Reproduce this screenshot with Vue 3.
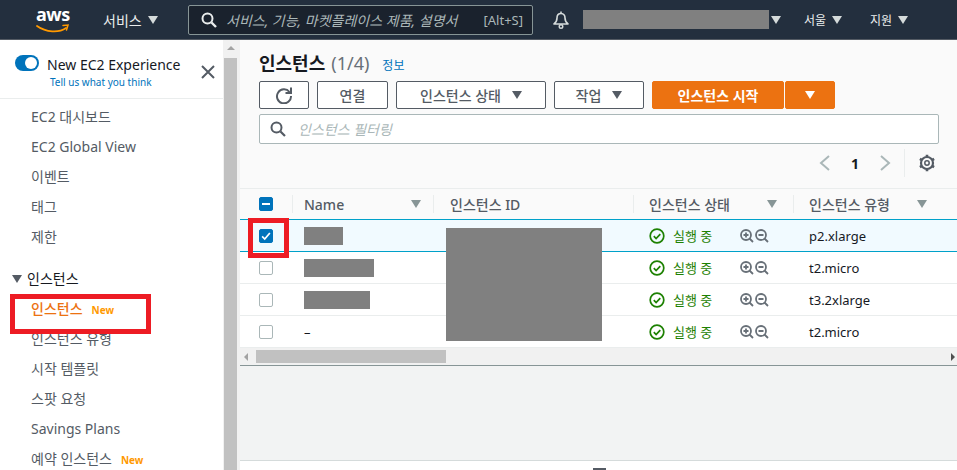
<template>
  <div class="page">
    <header class="topbar">
      <div class="logo">
        <span class="logo-text">aws</span>
        <svg class="logo-smile" width="34" height="10" viewBox="0 0 34 10">
          <path d="M1 2c9 6.500 22 7 29 2" fill="none" stroke="#f90" stroke-width="1.800" stroke-linecap="round" />
          <path d="M27 1.500l5-.5-1.500 5" fill="none" stroke="#f90" stroke-width="1.500" stroke-linecap="round" />
        </svg>
      </div>
      <div class="nav-item services">서비스 <i class="caret light" /></div>
      <div class="search">
        <svg width="18" height="18" viewBox="0 0 18 18" class="search-icon">
          <circle cx="7.500" cy="7.500" r="5" fill="none" stroke="#eaeded" stroke-width="2" />
          <path d="M11.500 11.500l4.500 4.500" stroke="#eaeded" stroke-width="2.400" />
        </svg>
        <span class="search-text">서비스, 기능, 마켓플레이스 제품, 설명서</span>
        <span class="search-key">[Alt+S]</span>
      </div>
      <svg class="bell" width="18" height="18" viewBox="0 0 18 18">
        <path d="M9 2.500c-3 0-4 2.500-4 4.500 0 3-1 4.500-3 6h14c-2-1.500-3-3-3-6 0-2-1-4.500-4-4.500z" fill="none" stroke="#d5dbdb" stroke-width="1.600" stroke-linejoin="round" />
        <circle cx="9" cy="15.500" r="1.800" fill="none" stroke="#d5dbdb" stroke-width="1.400" />
        <path d="M9 .5v2" stroke="#d5dbdb" stroke-width="1.600" />
      </svg>
      <div class="account-mask" />
      <i class="caret light account-caret" />
      <div class="nav-item region">서울 <i class="caret light" /></div>
      <div class="nav-item support">지원 <i class="caret light" /></div>
    </header>

    <div class="body">
      <aside class="sidebar">
        <div class="experience">
          <div class="toggle"><span class="knob" /></div>
          <div class="exp-text">
            <div class="exp-title">New EC2 Experience</div>
            <div class="exp-link">Tell us what you think</div>
          </div>
          <svg class="close" width="14" height="14" viewBox="0 0 14 14">
            <path d="M1 1l12 12M13 1L1 13" stroke="#545b64" stroke-width="2" />
          </svg>
        </div>
        <nav class="menu">
          <a v-for="m in topMenu" :key="m" class="menu-item">{{ m }}</a>
          <div class="menu-group"><i class="caret dark" /> 인스턴스</div>
          <a v-for="m in instanceMenu" :key="m.label" class="menu-item" :class="{ active: m.active }">
            {{ m.label }}<span v-if="m.isNew" class="new-tag">New</span>
          </a>
        </nav>
        <div class="red-box menu-box" />
      </aside>

      <div class="side-scroll">
        <span class="scroll-up" />
        <div class="side-thumb" />
      </div>

      <main class="main">
        <section class="panel">
          <div class="title-row">
            <h1>인스턴스</h1>
            <span class="count">(1/4)</span>
            <a class="info">정보</a>
          </div>
          <div class="actions">
            <button class="btn refresh">
              <svg width="18" height="18" viewBox="0 0 18 18">
                <path d="M14.500 6A7 7 0 1 0 16 10" fill="none" stroke="#545b64" stroke-width="2" />
                <path d="M16 1.500V7h-5.500" fill="none" stroke="#545b64" stroke-width="2" />
              </svg>
            </button>
            <button class="btn connect">연결</button>
            <button class="btn state">인스턴스 상태 <i class="caret dark" /></button>
            <button class="btn work">작업 <i class="caret dark" /></button>
            <div class="primary-group">
              <button class="btn primary start">인스턴스 시작</button>
              <button class="btn primary more"><i class="caret white" /></button>
            </div>
          </div>
          <div class="filter">
            <svg width="16" height="16" viewBox="0 0 16 16">
              <circle cx="6.500" cy="6.500" r="5" fill="none" stroke="#545b64" stroke-width="2" />
              <path d="M10.500 10.500l4.500 4.500" stroke="#545b64" stroke-width="2.200" />
            </svg>
            <span>인스턴스 필터링</span>
          </div>
          <div class="pager">
            <svg width="12" height="18" viewBox="0 0 12 18"><path d="M10 2L2 9l8 7" fill="none" stroke="#aab7b8" stroke-width="2" /></svg>
            <span class="page-num">1</span>
            <svg width="12" height="18" viewBox="0 0 12 18"><path d="M2 2l8 7-8 7" fill="none" stroke="#aab7b8" stroke-width="2" /></svg>
            <span class="pager-sep" />
            <svg class="gear" width="18" height="18" viewBox="0 0 18 18">
              <circle cx="9" cy="9" r="6" fill="none" stroke="#545b64" stroke-width="2.200" />
              <circle cx="9" cy="9" r="2.200" fill="none" stroke="#545b64" stroke-width="1.500" />
              <path d="M9 .8v2.400M9 14.800v2.400M1.900 4.900l2.100 1.200M14 11.900l2.100 1.200M1.900 13.100L4 11.900M14 6.100l2.100-1.200" stroke="#545b64" stroke-width="2.600" />
            </svg>
          </div>
        </section>

        <section class="table">
          <div class="row head">
            <div class="cell check"><span class="box on"><span class="dash" /></span></div>
            <div class="cell name"><b>Name</b><i class="filter-caret" /></div>
            <div class="cell id"><b>인스턴스 ID</b></div>
            <div class="cell status"><b>인스턴스 상태</b><i class="filter-caret" /></div>
            <div class="cell type"><b>인스턴스 유형</b><i class="filter-caret" /></div>
          </div>
          <div v-for="r in rows" :key="r.type + r.mask" class="row" :class="{ selected: r.selected }">
            <div class="cell check">
              <span class="box" :class="{ on: r.selected }">
                <svg v-if="r.selected" width="14" height="14" viewBox="0 0 14 14"><path d="M2.500 7.500l3 3 6-7" fill="none" stroke="#fff" stroke-width="2" /></svg>
              </span>
            </div>
            <div class="cell name">
              <span v-if="r.mask" class="mask" :style="{ width: r.mask + 'px' }" />
              <span v-else>–</span>
            </div>
            <div class="cell id" />
            <div class="cell status">
              <svg width="16" height="16" viewBox="0 0 16 16">
                <circle cx="8" cy="8" r="6.800" fill="none" stroke="#1d8102" stroke-width="1.700" />
                <path d="M4.800 8.200l2.300 2.300 4.200-4.400" fill="none" stroke="#1d8102" stroke-width="1.700" />
              </svg>
              <span class="running">실행 중</span>
              <svg class="zoom-icons" width="32" height="16" viewBox="0 0 32 16">
                <circle cx="7" cy="7" r="5" fill="none" stroke="#687078" stroke-width="1.800" />
                <path d="M10.500 10.500l3.500 3.500M4.500 7h5M7 4.500v5M25.500 10.500l3.500 3.500M19.500 7h5" stroke="#687078" stroke-width="1.800" />
                <circle cx="22" cy="7" r="5" fill="none" stroke="#687078" stroke-width="1.800" />
              </svg>
            </div>
            <div class="cell type">{{ r.type }}</div>
          </div>
          <div class="id-mask" />
          <div class="red-box check-box" />
        </section>

        <div class="h-scroll">
          <span class="arrow left" />
          <div class="h-thumb" />
          <span class="arrow right" />
        </div>
        <div class="grey-area" />
        <div class="detail">
          <span class="grip" />
        </div>
      </main>
    </div>
  </div>
</template>

<script setup>
const topMenu = ['EC2 대시보드', 'EC2 Global View', '이벤트', '태그', '제한']
const instanceMenu = [
  { label: '인스턴스', active: true, isNew: true },
  { label: '인스턴스 유형' },
  { label: '시작 템플릿' },
  { label: '스팟 요청' },
  { label: 'Savings Plans' },
  { label: '예약 인스턴스', isNew: true },
]
const rows = [
  { mask: 39, type: 'p2.xlarge', selected: true },
  { mask: 70, type: 't2.micro' },
  { mask: 66, type: 't3.2xlarge' },
  { mask: 0, type: 't2.micro' },
]
</script>

<style>
html, body { margin: 0; overflow: hidden; background: #fff; }
</style>

<style scoped>
.page {
  width: 957px;
  height: 470px;
  overflow: hidden;
  font-family: "Noto Sans", "Noto Sans CJK KR", sans-serif;
  font-size: 14px;
  color: #16191f;
  position: relative;
}
.caret {
  display: inline-block;
  width: 0;
  height: 0;
  border-left: 5px solid transparent;
  border-right: 5px solid transparent;
  border-top: 8px solid #545b64;
  margin-left: 4px;
}
.caret.light { border-top-color: #d5dbdb; }
.caret.white { border-top-color: #fff; }

/* top bar */
.topbar {
  height: 40px;
  box-sizing: border-box;
  background: #232f3e;
  border-bottom: 1px solid #545b64;
  display: flex;
  align-items: center;
  color: #eaeded;
  padding-left: 36px;
}
.logo { width: 34px; height: 30px; position: relative; margin-right: 33px; }
.logo-text { display: block; font: 700 18px/20px "Open Sans", sans-serif; color: #fff; margin-top: -1px; letter-spacing: -0.5px; }
.logo-smile { position: absolute; left: 0; top: 19px; }
.nav-item { font-size: 13px; white-space: nowrap; display: flex; align-items: center; gap: 2px; }
.services { width: 85px; font-size: 14px; }
.search {
  width: 345px;
  height: 30px;
  box-sizing: border-box;
  background: #1a222d;
  border: 1px solid #879596;
  border-radius: 2px;
  display: flex;
  align-items: center;
  padding: 0 9px 0 11px;
  font-style: italic;
  color: #aab7b8;
}
.search-icon { margin-right: 8px; }
.search-text { flex: 1; font-size: 14px; white-space: nowrap; }
.search-key { font-style: normal; font-size: 13px; }
.bell { margin-left: 19px; }
.account-mask { width: 186px; height: 19px; background: #808080; margin-left: 13px; }
.account-caret { margin-left: 2px; margin-right: 23px; }
.region { width: 66px; font-size: 12px; }
.support { font-size: 12px; }

/* body */
.body { display: flex; height: 430px; }
.sidebar { width: 223px; flex-shrink: 0; position: relative; background: #fff; }
.experience {
  height: 59px;
  box-sizing: border-box;
  border-bottom: 1px solid #eaeded;
  display: flex;
  padding: 15px 0 0 15px;
}
.toggle { width: 24px; height: 16px; border-radius: 8px; background: #0073bb; position: relative; margin-right: 8px; flex-shrink: 0; }
.knob { position: absolute; right: 2px; top: 2px; width: 12px; height: 12px; border-radius: 50%; background: #fff; }
.exp-text { width: 137px; white-space: nowrap; }
.exp-title { font-size: 14px; line-height: 19px; }
.exp-link { font-size: 10px; line-height: 14px; color: #0073bb; margin-left: 3px; margin-top: 1px; }
.close { margin: 10px 0 0 17px; }
.menu { padding-top: 3px; }
.menu-item {
  display: block;
  height: 30px;
  line-height: 30px;
  padding-left: 31px;
  color: #545b64;
  font-size: 14px;
  white-space: nowrap;
}
.menu-item.active { color: #ec7211; font-weight: 500; }
.new-tag { color: #ff9900; font-size: 10px; font-weight: 700; margin-left: 9px; }
.menu-group { height: 30px; line-height: 30px; margin-top: 12px; padding-left: 12px; color: #16191f; display: flex; align-items: center; gap: 5px; }
.menu-group .caret { margin-left: 0; }
.red-box { position: absolute; border: 5px solid #ed1c24; box-sizing: border-box; pointer-events: none; }
.menu-box { left: 10px; top: 254px; width: 141px; height: 40px; }
.side-scroll { width: 17px; flex-shrink: 0; background: #f1f1f1; position: relative; }
.side-thumb { position: absolute; left: 1px; right: 3px; top: 18px; bottom: 0; background: #c1c1c1; }
.scroll-up { position: absolute; left: 4px; top: 6px; border-left: 4px solid transparent; border-right: 4px solid transparent; border-bottom: 4px solid #a3a3a3; }

.main { flex: 1; background: #fafafa; display: flex; flex-direction: column; min-width: 0; }
.panel { height: 149px; box-sizing: border-box; padding: 9px 18px 0 19px; border-bottom: 1px solid #eaeded; }
.title-row { display: flex; align-items: baseline; height: 28px; }
h1 { margin: 0; font-size: 18px; font-weight: 700; line-height: 28px; }
.count { margin-left: 6px; font-size: 18px; color: #687078; }
.info { margin-left: 13px; font-size: 12px; color: #0073bb; }
.actions { display: flex; gap: 8px; margin-top: 4px; height: 28px; }
.btn {
  box-sizing: border-box;
  height: 28px;
  border: 1px solid #545b64;
  border-radius: 2px;
  background: #fff;
  color: #545b64;
  font: 500 14px "Noto Sans", "Noto Sans CJK KR", sans-serif;
  padding: 0;
  display: flex;
  align-items: center;
  justify-content: center;
}
.btn .caret { margin-left: 11px; }
.refresh { width: 50px; }
.connect { width: 71px; }
.state { width: 150px; }
.work { width: 90px; }
.primary-group { display: flex; gap: 1px; }
.primary { background: #ec7211; border-color: #ec7211; color: #fff; font-weight: 700; }
.start { width: 132px; }
.more { width: 50px; }
.more .caret { margin-left: 0; }
.filter {
  margin-top: 5px;
  width: 680px;
  height: 30px;
  box-sizing: border-box;
  background: #fff;
  border: 1px solid #aab7b8;
  border-radius: 2px;
  display: flex;
  align-items: center;
  padding-left: 10px;
  gap: 12px;
  font-style: italic;
  color: #aab7b8;
}
.pager { display: flex; align-items: center; height: 28px; margin-top: 5px; justify-content: flex-end; padding-right: 3px; }
.page-num { width: 48px; text-align: center; font-weight: 700; font-size: 14px; }
.pager-sep { width: 1px; height: 28px; background: #eaeded; margin: 0 13px 0 13px; }

/* table */
.table { position: relative; }
.row { display: flex; height: 32px; box-sizing: border-box; background: #fff; border-bottom: 1px solid #eaeded; }
.row.head { height: 31px; background: #fafafa; border-bottom: 1px solid #00a1c9; color: #545b64; }
.row.selected { background: #f1faff; border-bottom-color: #00a1c9; }
.cell { display: flex; align-items: center; box-sizing: border-box; font-size: 13px; }
.cell.check { width: 52px; padding-left: 19px; }
.cell.name { width: 141px; padding: 0 12px; }
.cell.id { width: 200px; padding: 0 17px; }
.cell.status { width: 160px; padding: 0 16px; }
.cell.type { width: 150px; padding: 0 16px; }
.head .cell { font-size: 14px; position: relative; }
.head .cell:not(.check)::before { content: ""; position: absolute; left: 0; top: 6px; bottom: 6px; width: 1px; background: #eaeded; }
.head b { font-weight: 500; }
.box { width: 14px; height: 14px; box-sizing: border-box; border: 1px solid #aab7b8; border-radius: 2px; background: #fff; display: flex; align-items: center; justify-content: center; }
.box.on { background: #0073bb; border-color: #0073bb; }
.dash { width: 8px; height: 2px; background: #fff; }
.filter-caret {
  margin-left: auto;
  width: 0; height: 0;
  border-left: 5px solid transparent;
  border-right: 5px solid transparent;
  border-top: 8px solid #879596;
}
.mask { height: 18px; background: #808080; }
.running { color: #1d8102; margin: 0 27px 0 8px; white-space: nowrap; }
.zoom-icons { flex-shrink: 0; }
.id-mask { position: absolute; left: 206px; top: 39px; width: 156px; height: 113px; background: #808080; }
.check-box { left: 8px; top: 29px; width: 41px; height: 40px; }

.h-scroll { height: 17px; background: #f1f1f1; position: relative; border-bottom: 1px solid #879596; box-sizing: content-box; }
.h-thumb { position: absolute; left: 16px; width: 190px; top: 2px; height: 13px; background: #c1c1c1; }
.arrow { position: absolute; top: 5px; border-top: 4px solid transparent; border-bottom: 4px solid transparent; }
.arrow.left { left: 4px; border-right: 4px solid #a3a3a3; }
.arrow.right { right: 2px; border-left: 4px solid #505050; }
.grey-area { height: 94px; background: #f2f3f3; border-bottom: 1px solid #d5dbdb; }
.detail { flex: 1; background: #fff; position: relative; }
.grip { position: absolute; left: 353px; bottom: 0; width: 13px; height: 2px; background: #545b64; }
</style>
